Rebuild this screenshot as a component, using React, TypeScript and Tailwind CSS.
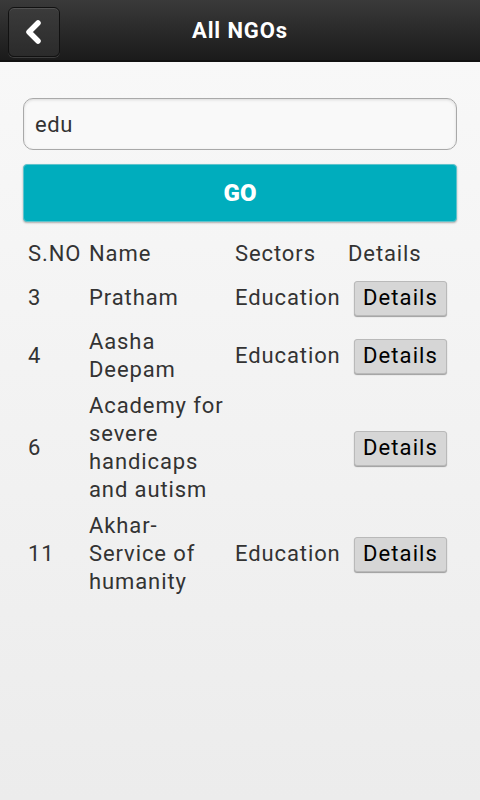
const rows = [
  { no: '3', name: ['Pratham'], sector: 'Education' },
  { no: '4', name: ['Aasha', 'Deepam'], sector: 'Education' },
  { no: '6', name: ['Academy for', 'severe', 'handicaps', 'and autism'], sector: '' },
  { no: '11', name: ['Akhar-', 'Service of', 'humanity'], sector: 'Education' },
];

function DetailsButton() {
  return (
    <button className="h-[35px] w-[93px] rounded-[3px] border border-[#b9b9b9] bg-[#d6d6d6] text-[22px] leading-none tracking-[1.1px] text-black shadow-[0_1px_1px_rgba(0,0,0,0.35)]">
      Details
    </button>
  );
}

export default function App() {
  return (
    <div
      className="flex min-h-[800px] w-[480px] flex-col bg-gradient-to-b from-[#f9f9f9] to-[#ececec] text-[#333]"
      style={{ fontFamily: 'Roboto, "Liberation Sans", sans-serif' }}
    >
      <header className="relative flex h-[62px] items-center justify-center border-b-2 border-[#111] bg-gradient-to-b from-[#3a3a3a] to-[#1b1b1b]">
        <button className="absolute left-[8px] top-[7px] flex h-[50px] w-[52px] items-center justify-center rounded-[6px] border border-[#111] bg-gradient-to-b from-[#3b3b3b] to-[#2b2b2b] shadow-[inset_0_1px_0_rgba(255,255,255,0.12),0_1px_0_rgba(255,255,255,0.15)]">
          <svg width="22" height="26" viewBox="0 0 22 26">
            <path d="M15 4 L6 13 L15 22" fill="none" stroke="#fff" strokeWidth="5.5" strokeLinecap="round" strokeLinejoin="round" />
          </svg>
        </button>
        <h1 className="text-[22px] font-bold tracking-[0.9px] text-white">All NGOs</h1>
      </header>

      <div className="px-[23px] pt-[36px]">
        <input
          defaultValue="edu"
          className="h-[52px] w-full rounded-[10px] border border-[#a9a9a9] bg-[#f9f9f9] px-[11px] text-[22px] tracking-[0.6px] text-[#333] shadow-[inset_0_1px_3px_rgba(0,0,0,0.12)] outline-none"
        />
        <button className="mt-[14px] flex h-[58px] w-full items-center justify-center rounded-[4px] border border-[#5fc3cc] bg-[#00adbd] text-[24px] font-black text-white shadow-[0_1px_2px_rgba(0,0,0,0.3)]">
          GO
        </button>
      </div>

      <div className="mt-[14px] pl-[28px] pr-[33px] text-[22px] leading-[28px] tracking-[0.9px]">
        <div className="grid grid-cols-[61px_146px_113px_1fr] items-center py-1">
          <div>S.NO</div>
          <div>Name</div>
          <div>Sectors</div>
          <div>Details</div>
        </div>
        {rows.map((r) => (
          <div key={r.no} className="grid min-h-[52px] grid-cols-[61px_146px_113px_1fr] items-center py-1">
            <div>{r.no}</div>
            <div>
              {r.name.map((l) => (
                <div key={l}>{l}</div>
              ))}
            </div>
            <div>{r.sector}</div>
            <div className="pl-[6px]">
              <DetailsButton />
            </div>
          </div>
        ))}
      </div>
    </div>
  );
}
